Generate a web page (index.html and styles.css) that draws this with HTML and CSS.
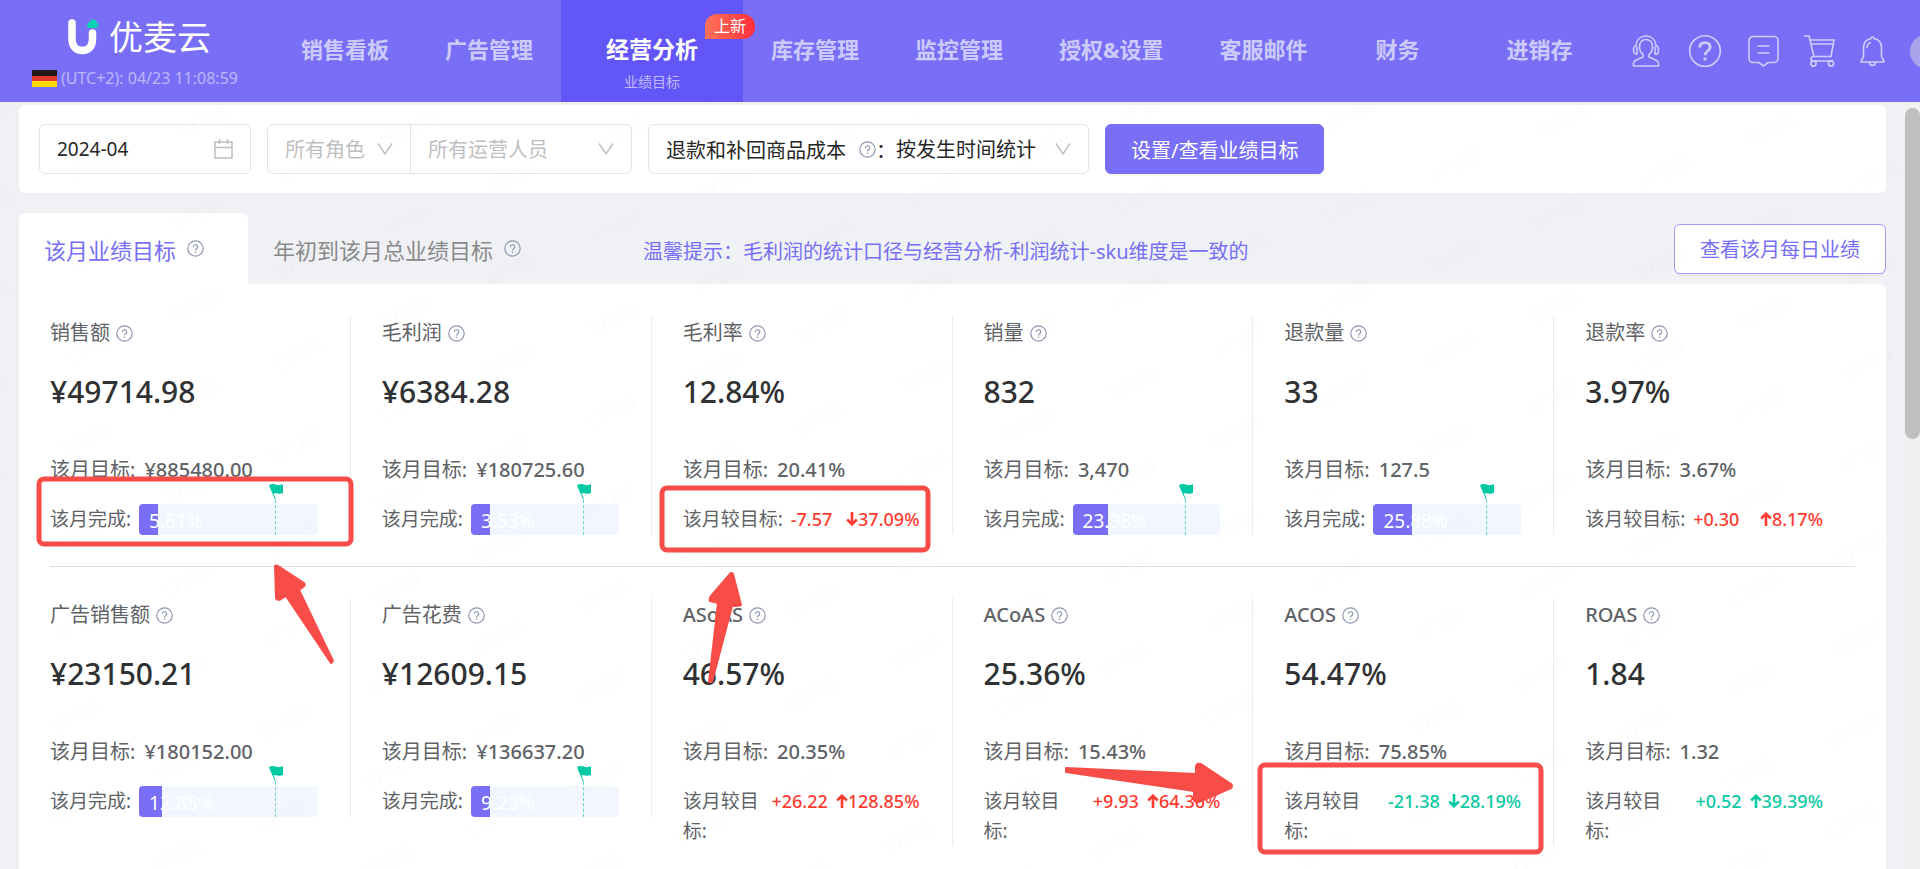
FILE: index.html
```html
<!DOCTYPE html>
<html lang="zh-CN">

<head>
  <meta charset="UTF-8">
  <meta name="viewport" content="width=device-width, initial-scale=1.0">
  <title>业绩目标</title>
  <link rel="stylesheet" href="styles.css">
</head>

<body>

  <!-- 公用图标 -->
  <svg class="defs" width="0" height="0">
    <symbol id="help" viewBox="0 0 17 17">
      <circle cx="8.500" cy="8.500" r="7.700" fill="none" stroke="currentColor" stroke-width="1.200" />
      <path d="M6.300 6.900a2.200 2.200 0 1 1 3.300 1.900c-.8.500-1.100.8-1.100 1.700" fill="none" stroke="currentColor" stroke-width="1.200" />
      <circle cx="8.500" cy="12.300" r=".8" fill="currentColor" />
    </symbol>
    <symbol id="arrow" viewBox="0 0 16 12">
      <path d="M1 0.500 L8 11 L15 0.500" fill="none" stroke="currentColor" stroke-width="1.400" />
    </symbol>
    <symbol id="flag" viewBox="0 0 14 16">
      <path d="M0 1.500C2.500-.5 5 0 7.500.8S12 1 14 .3V9c-2 1-4 .8-5.500.5S6 9 4.500 9.500L7 15.500H6z" fill="#00c9a4" />
    </symbol>
    <symbol id="down" viewBox="0 0 12 14">
      <path d="M6 0v12M1.200 7.500L6 12.300l4.800-4.800" fill="none" stroke="currentColor" stroke-width="2.600" />
    </symbol>
    <symbol id="up" viewBox="0 0 12 14">
      <path d="M6 14V2M1.200 6.500L6 1.700l4.800 4.800" fill="none" stroke="currentColor" stroke-width="2.600" />
    </symbol>
  </svg>

  <header class="header">
    <div class="brand">
      <div class="logo">
        <svg width="31" height="36" viewBox="0 0 31 36">
          <path d="M4 4v16c0 7 4 11.500 10.500 11.500S24.500 27 24.500 20v-6" fill="none" stroke="#fff" stroke-width="7.500" stroke-linecap="round" />
          <path d="M19 6.500c0-2 1.500-3 2.700-3C22.500 1 24 0 25.500.300c2 .2 3 1.700 3 3.200 1.500.2 2 1.500 2 2.500 0 1.700-1.500 3-3 3h-5.500c-1.700 0-3-1-3-2.500z" fill="#0bd3ae" />
        </svg>
        <span>优麦云</span>
      </div>
      <div class="zone">
        <i class="germany"></i>
        <span>(UTC+2): 04/23 11:08:59</span>
      </div>
    </div>

    <nav class="nav">
      <a href="#">销售看板</a>
      <a href="#">广告管理</a>
      <a href="#" class="active">经营分析<small>业绩目标</small><em>上新</em></a>
      <a href="#">库存管理</a>
      <a href="#">监控管理</a>
      <a href="#">授权&amp;设置</a>
      <a href="#">客服邮件</a>
      <a href="#" class="w124">财务</a>
      <a href="#" class="w160">进销存</a>
    </nav>

    <div class="tools">
      <svg width="32" height="32" viewBox="0 0 32 32">
        <path d="M7 19.500c-2.200 0-3.500-1.500-3.500-4.500s1.200-4 2.500-4.500C6.500 4.500 10.500 1 16 1s9.500 3.500 10 9.500c1.300.5 2.500 1.500 2.500 4.500s-1.300 4.500-3.500 4.500M7 19.500v-8M25 19.500v-8" />
        <path d="M13 22v-2.500c-2.500-2-3.500-4.500-3.500-7.500 0-4.500 2.500-7.500 6.500-7.500s6.500 3 6.500 7.500c0 3-1 5.500-3.500 7.500V22c5 2.500 9.500 3.500 9.500 6v3h-25v-3c0-2.500 4.500-3.500 9.500-6z" />
      </svg>
      <svg width="36" height="34" viewBox="0 0 36 34">
        <circle cx="18" cy="17" r="15.300" />
        <path d="M12.800 13.500c0-3 2-4.800 5.200-4.800s5.200 1.800 5.200 4.300c0 4-5.200 4-5.200 8.300" stroke-width="2.800" />
        <path d="M18 23.500v3" stroke-width="3" />
      </svg>
      <svg width="31" height="32" viewBox="0 0 31 32">
        <path d="M5 1.500h21a4 4 0 0 1 4 4v18a4 4 0 0 1-4 4h-6l-4.500 3.500-4.500-3.500H5a4 4 0 0 1-4-4v-18a4 4 0 0 1 4-4zM9.500 11h12M9.500 18h12" />
      </svg>
      <svg width="31" height="32" viewBox="0 0 31 32">
        <path d="M0 1h5l5 20.500h17l3-16.500H6M7 9h22M10 21.500c-4 .5-4 4.500-1 4.500h20" />
        <circle cx="9.500" cy="28.500" r="2.600" />
        <circle cx="27" cy="28.500" r="2.600" />
      </svg>
      <svg width="25" height="32" viewBox="0 0 25 32">
        <path d="M11 3.500a1.500 1.500 0 1 1 3 0c4.500 1 7.500 4 7.500 9V21c0 2.500 2.500 3.500 2.500 6H1c0-2.500 2.500-3.500 2.500-6v-8.500c0-5 3-8 7.500-9zM7 13c0-3 1.500-5 4-5.500M9.500 27c0 4.500 6 4.500 6 0" />
      </svg>
      <i class="avatar"></i>
    </div>
  </header>

  <div class="page">
    <main class="main">

      <form class="filter">
        <label class="field date">
          <input type="text" value="2024-04" aria-label="月份">
          <svg width="19" height="20" viewBox="0 0 19 20">
            <path d="M1 3h17v16H1zM1 8.500h17M5.500 0v5M13.500 0v5" fill="none" stroke="currentColor" stroke-width="1.500" />
          </svg>
        </label>
        <div class="group">
          <label class="field role">
            <select aria-label="角色">
              <option>所有角色</option>
            </select>
            <svg width="16" height="12"><use href="#arrow" /></svg>
          </label>
          <label class="field staff">
            <select aria-label="运营人员">
              <option>所有运营人员</option>
            </select>
            <svg width="16" height="12"><use href="#arrow" /></svg>
          </label>
        </div>
        <label class="field cost">
          <span>退款和补回商品成本</span>
          <svg class="help" width="17" height="17"><use href="#help" /></svg>
          <span>：</span>
          <select>
            <option>按发生时间统计</option>
          </select>
          <svg width="16" height="12"><use href="#arrow" /></svg>
        </label>
        <button type="button" class="btn primary">设置/查看业绩目标</button>
      </form>

      <div class="tabs">
        <a href="#" class="tab active">该月业绩目标<svg class="help" width="17" height="17"><use href="#help" /></svg></a>
        <a href="#" class="tab">年初到该月总业绩目标<svg class="help" width="17" height="17"><use href="#help" /></svg></a>
        <p class="tip">温馨提示：毛利润的统计口径与经营分析-利润统计-sku维度是一致的</p>
        <button type="button" class="btn">查看该月每日业绩</button>
      </div>

      <section class="panel">
        <div class="row">
          <div class="item">
            <h3>销售额<svg class="help" width="17" height="17"><use href="#help" /></svg></h3>
            <strong>¥49714.98</strong>
            <p class="target">该月目标:<b>¥885480.00</b></p>
            <div class="done">
              <span>该月完成:</span>
              <div class="bar">
                <i style="width: 5.61%"></i><span>5.61%</span>
                <div class="mark"><svg width="14" height="16"><use href="#flag" /></svg></div>
              </div>
            </div>
          </div>
          <div class="item">
            <h3>毛利润<svg class="help" width="17" height="17"><use href="#help" /></svg></h3>
            <strong>¥6384.28</strong>
            <p class="target">该月目标:<b>¥180725.60</b></p>
            <div class="done">
              <span>该月完成:</span>
              <div class="bar">
                <i style="width: 3.53%"></i><span>3.53%</span>
                <div class="mark"><svg width="14" height="16"><use href="#flag" /></svg></div>
              </div>
            </div>
          </div>
          <div class="item">
            <h3>毛利率<svg class="help" width="17" height="17"><use href="#help" /></svg></h3>
            <strong>12.84%</strong>
            <p class="target">该月目标:<b>20.41%</b></p>
            <div class="diff red">
              <span>该月较目标:</span>
              <div><b>-7.57</b><b><svg width="12" height="14"><use href="#down" /></svg>37.09%</b></div>
            </div>
          </div>
          <div class="item">
            <h3>销量<svg class="help" width="17" height="17"><use href="#help" /></svg></h3>
            <strong>832</strong>
            <p class="target">该月目标:<b>3,470</b></p>
            <div class="done">
              <span>该月完成:</span>
              <div class="bar">
                <i style="width: 23.98%"></i><span>23.98%</span>
                <div class="mark"><svg width="14" height="16"><use href="#flag" /></svg></div>
              </div>
            </div>
          </div>
          <div class="item">
            <h3>退款量<svg class="help" width="17" height="17"><use href="#help" /></svg></h3>
            <strong>33</strong>
            <p class="target">该月目标:<b>127.5</b></p>
            <div class="done">
              <span>该月完成:</span>
              <div class="bar">
                <i style="width: 25.88%"></i><span>25.88%</span>
                <div class="mark"><svg width="14" height="16"><use href="#flag" /></svg></div>
              </div>
            </div>
          </div>
          <div class="item">
            <h3>退款率<svg class="help" width="17" height="17"><use href="#help" /></svg></h3>
            <strong>3.97%</strong>
            <p class="target">该月目标:<b>3.67%</b></p>
            <div class="diff red">
              <span>该月较目标:</span>
              <div><b>+0.30</b><b><svg width="12" height="14"><use href="#up" /></svg>8.17%</b></div>
            </div>
          </div>
        </div>

        <div class="row">
          <div class="item">
            <h3>广告销售额<svg class="help" width="17" height="17"><use href="#help" /></svg></h3>
            <strong>¥23150.21</strong>
            <p class="target">该月目标:<b>¥180152.00</b></p>
            <div class="done">
              <span>该月完成:</span>
              <div class="bar">
                <i style="width: 12.85%"></i><span>12.85%</span>
                <div class="mark"><svg width="14" height="16"><use href="#flag" /></svg></div>
              </div>
            </div>
          </div>
          <div class="item">
            <h3>广告花费<svg class="help" width="17" height="17"><use href="#help" /></svg></h3>
            <strong>¥12609.15</strong>
            <p class="target">该月目标:<b>¥136637.20</b></p>
            <div class="done">
              <span>该月完成:</span>
              <div class="bar">
                <i style="width: 9.23%"></i><span>9.23%</span>
                <div class="mark"><svg width="14" height="16"><use href="#flag" /></svg></div>
              </div>
            </div>
          </div>
          <div class="item">
            <h3><b>ASoAS</b><svg class="help" width="17" height="17"><use href="#help" /></svg></h3>
            <strong>46.57%</strong>
            <p class="target">该月目标:<b>20.35%</b></p>
            <div class="diff wrap red">
              <span>该月较目标:</span>
              <div><b>+26.22</b><b><svg width="12" height="14"><use href="#up" /></svg>128.85%</b></div>
            </div>
          </div>
          <div class="item">
            <h3><b>ACoAS</b><svg class="help" width="17" height="17"><use href="#help" /></svg></h3>
            <strong>25.36%</strong>
            <p class="target">该月目标:<b>15.43%</b></p>
            <div class="diff wrap red">
              <span>该月较目标:</span>
              <div><b>+9.93</b><b><svg width="12" height="14"><use href="#up" /></svg>64.36%</b></div>
            </div>
          </div>
          <div class="item">
            <h3><b>ACOS</b><svg class="help" width="17" height="17"><use href="#help" /></svg></h3>
            <strong>54.47%</strong>
            <p class="target">该月目标:<b>75.85%</b></p>
            <div class="diff wrap green">
              <span>该月较目标:</span>
              <div><b>-21.38</b><b><svg width="12" height="14"><use href="#down" /></svg>28.19%</b></div>
            </div>
          </div>
          <div class="item">
            <h3><b>ROAS</b><svg class="help" width="17" height="17"><use href="#help" /></svg></h3>
            <strong>1.84</strong>
            <p class="target">该月目标:<b>1.32</b></p>
            <div class="diff wrap green">
              <span>该月较目标:</span>
              <div><b>+0.52</b><b><svg width="12" height="14"><use href="#up" /></svg>39.39%</b></div>
            </div>
          </div>
        </div>
      </section>
    </main>

    <div class="scroll"><i></i></div>

    <!-- 水印 -->
    <svg class="watermark" aria-hidden="true">
      <defs>
        <pattern id="mark" width="209" height="92" patternUnits="userSpaceOnUse" patternTransform="translate(151 -5) rotate(2)">
          <text x="52" y="29" text-anchor="middle" transform="rotate(-29 52 23)">17185</text>
          <text x="156" y="75" text-anchor="middle" transform="rotate(-29 156 69)">17185</text>
        </pattern>
      </defs>
      <rect width="100%" height="100%" fill="url(#mark)" />
    </svg>
  </div>

  <!-- 红框和箭头标注 -->
  <svg class="notes" width="1905" height="869" viewBox="0 0 1905 869" aria-hidden="true">
    <g fill="none" stroke="#f74c47" stroke-width="5">
      <rect x="39" y="479" width="312" height="65" rx="5" />
      <rect x="662" y="488" width="266" height="62" rx="5" />
      <rect x="1260" y="765" width="281" height="87" rx="5" />
    </g>
    <g fill="#f74c47" stroke="#f74c47" stroke-width="2" stroke-linejoin="round">
      <path d="M275 566q1-1 3 0l26 17q2 2-1 4l-4 3 34 71-2 2-45-67-5 3q-4 2-5-1z" />
      <path d="M730 574q1-2 3 0l8 31q0 1-9 1l-20 76-3 0 9-79-8-2q-1-2 1-5z" />
      <path d="M1066 768l130 6v-8q1-3 5-2l30 20q2 2 0 4l-32 14q-5 0-5-2v-9l-128-19z" />
    </g>
  </svg>

</body>

</html>
```

FILE: styles.css
```css
* {
  margin: 0;
  padding: 0;
  box-sizing: border-box;
}

body {
  height: 100vh;
  overflow: hidden;
  position: relative;
  background: #eff1f5;
  color: #606266;
  font-family: "Noto Sans", "Noto Sans CJK SC", sans-serif;
  font-size: 20px;
}

a {
  text-decoration: none;
}

input,
select,
button {
  font: inherit;
  border: 0;
  outline: 0;
  background: none;
}

svg {
  flex: none;
}

.defs {
  position: absolute;
}

/* 头部 */
.header {
  display: flex;
  height: 102px;
  background: #786ff6;
  overflow: hidden;
}

.brand {
  flex: none;
  width: 273px;
  padding: 12px 0 0 32px;
}

.logo {
  display: flex;
  align-items: center;
  gap: 10px;
  padding-left: 36px;
  height: 50px;
  color: #fff;
  font-size: 34px;
  line-height: 50px;
}

.zone {
  display: flex;
  align-items: center;
  gap: 4px;
  margin-top: 4px;
  color: rgba(255, 255, 255, .5);
  font-size: 16px;
  line-height: 24px;
  white-space: nowrap;
}

.germany {
  width: 25px;
  height: 17px;
  background: linear-gradient(#231815 33%, #dd3a32 33%, #dd3a32 66%, #fdd903 66%);
}

.nav {
  display: flex;
}

.nav a {
  position: relative;
  height: 102px;
  padding: 34px 28px 0;
  color: rgba(255, 255, 255, .65);
  font-size: 22px;
  font-weight: bold;
  line-height: 30px;
  text-align: center;
  white-space: nowrap;
}

.nav .w124 {
  width: 124px;
}

.nav .w160 {
  width: 160px;
}

.nav .active {
  padding: 34px 45px 0;
  background: #6256f9;
  color: #fff;
  font-size: 23px;
}

.nav small {
  display: block;
  margin-top: 8px;
  color: rgba(255, 255, 255, .6);
  font-size: 14px;
  font-weight: normal;
  line-height: 20px;
}

.nav em {
  position: absolute;
  z-index: 1;
  top: 14px;
  left: 144px;
  width: 50px;
  border-radius: 12px 12px 12px 0;
  background: linear-gradient(90deg, #ff7359, #ff2e3b);
  color: #fff;
  font-size: 16px;
  font-style: normal;
  font-weight: normal;
  line-height: 25px;
}

.tools {
  flex: none;
  display: flex;
  align-items: center;
  gap: 25px;
  margin-left: 10px;
  fill: none;
  stroke: #d0cdfb;
  stroke-width: 1.6;
}

.avatar {
  flex: none;
  width: 35px;
  height: 35px;
  border-radius: 50%;
  background: #aaa3ec;
}

/* 主体 */
.page {
  position: relative;
  display: flex;
  height: calc(100vh - 102px);
  overflow: hidden;
}

.main {
  flex: 1;
  min-width: 0;
  padding: 3px 19px 0;
}

.scroll {
  flex: none;
  width: 15px;
  padding-top: 6px;
  background: #f0f0f0;
}

.scroll i {
  display: block;
  height: 43.5%;
  border-radius: 8px;
  background: #bfbfbf;
}

.filter {
  display: flex;
  gap: 16px;
  padding: 19px 20px;
  border-radius: 6px;
  background: #fff;
}

.group {
  display: flex;
}

.field {
  display: flex;
  align-items: center;
  height: 50px;
  padding: 0 17px;
  border: 1px solid #e2e3e6;
  border-radius: 6px;
  color: #bfbfbf;
}

.field select {
  flex: 1;
  min-width: 0;
  height: 48px;
  appearance: none;
  color: inherit;
}

.date {
  width: 212px;
}

.date input {
  flex: 1;
  min-width: 0;
  height: 48px;
  color: #262626;
  font-size: 19px;
}

.role {
  width: 144px;
  border-radius: 6px 0 0 6px;
}

.staff {
  width: 222px;
  margin-left: -1px;
  border-radius: 0 6px 6px 0;
}

.cost {
  width: 441px;
}

.cost span,
.cost select {
  color: #262626;
}

.cost .help {
  margin-left: 13px;
}

.help {
  color: #8f96b3;
}

.btn {
  height: 50px;
  padding: 0 25px;
  border: 1px solid #a29bf9;
  border-radius: 6px;
  background: #fff;
  box-shadow: 0 2px 0 rgba(0, 0, 0, .03);
  color: #786ff6;
  white-space: nowrap;
}

.btn.primary {
  border-color: #786ff6;
  background: #786ff6;
  color: #fff;
}

.tabs {
  display: flex;
  align-items: center;
  height: 71px;
  margin-top: 20px;
}

.tab {
  display: flex;
  align-items: center;
  gap: 11px;
  height: 71px;
  padding: 0 44px 0 25px;
  color: #8a8a8a;
  font-size: 22px;
  white-space: nowrap;
}

.tab.active {
  border-radius: 6px 6px 0 0;
  background: #fff;
  color: #786ff6;
}

.tip {
  margin-left: 78px;
  padding-top: 3px;
  color: #786ff6;
  white-space: nowrap;
}

.tabs .btn {
  margin-left: auto;
}

.panel {
  height: 100%;
  padding: 32px 31px;
  border-radius: 0 6px 0 0;
  background: #fff;
}

.row {
  display: grid;
  grid-template-columns: repeat(6, 1fr);
  align-items: start;
}

.row + .row {
  margin-top: 31px;
  padding-top: 31px;
  border-top: 1px solid #dfdfdf;
}

.item {
  padding: 0 32px 0 31px;
  border-right: 1px solid #ebecef;
}

.item:first-child {
  padding-left: 0;
}

.item:last-child {
  border-right: 0;
}

.item h3 {
  display: flex;
  align-items: center;
  gap: 6px;
  font-size: 20px;
  font-weight: normal;
  line-height: 34px;
}

.item b {
  font-weight: 500;
}

.item strong {
  display: block;
  margin-top: 22px;
  color: #303133;
  font-size: 30px;
  font-weight: 500;
  line-height: 40px;
}

.target {
  margin-top: 43px;
  line-height: 30px;
}

.target b {
  margin-left: 9px;
}

.done,
.diff {
  display: flex;
  margin-top: 19px;
  font-size: 19px;
  line-height: 30px;
}

.done > span,
.diff > span {
  margin-right: 8px;
}

/* 进度条 */
.bar {
  position: relative;
  flex: 1;
  height: 31px;
  border-radius: 4px;
  background: #f2f7ff;
}

.bar i {
  display: block;
  min-width: 19px;
  height: 31px;
  border-radius: 4px 0 0 4px;
  background: #786ff6;
}

.bar span {
  position: absolute;
  top: 2px;
  left: 10px;
  color: #fff;
}

.mark {
  position: absolute;
  top: -4px;
  bottom: 0;
  left: 76%;
  border-left: 1px dashed #5fd9c4;
}

.mark svg {
  position: absolute;
  top: -16px;
  left: -7px;
}

.diff div {
  flex: 1;
  display: flex;
  justify-content: space-between;
  gap: 8px;
  font-size: 18px;
}

.diff b {
  white-space: nowrap;
}

.diff.wrap > span {
  width: 78px;
  margin-right: 0;
}

.diff.wrap div {
  justify-content: flex-end;
}

.red div {
  color: #ff3b30;
}

.green div {
  color: #0bc9a2;
}

.watermark {
  position: absolute;
  top: 0;
  left: 0;
  width: 100%;
  height: 100%;
  pointer-events: none;
}

.watermark text {
  fill: rgba(0, 0, 0, .012);
  font-size: 19px;
}

.notes {
  position: absolute;
  top: 0;
  left: 0;
  pointer-events: none;
}
```
